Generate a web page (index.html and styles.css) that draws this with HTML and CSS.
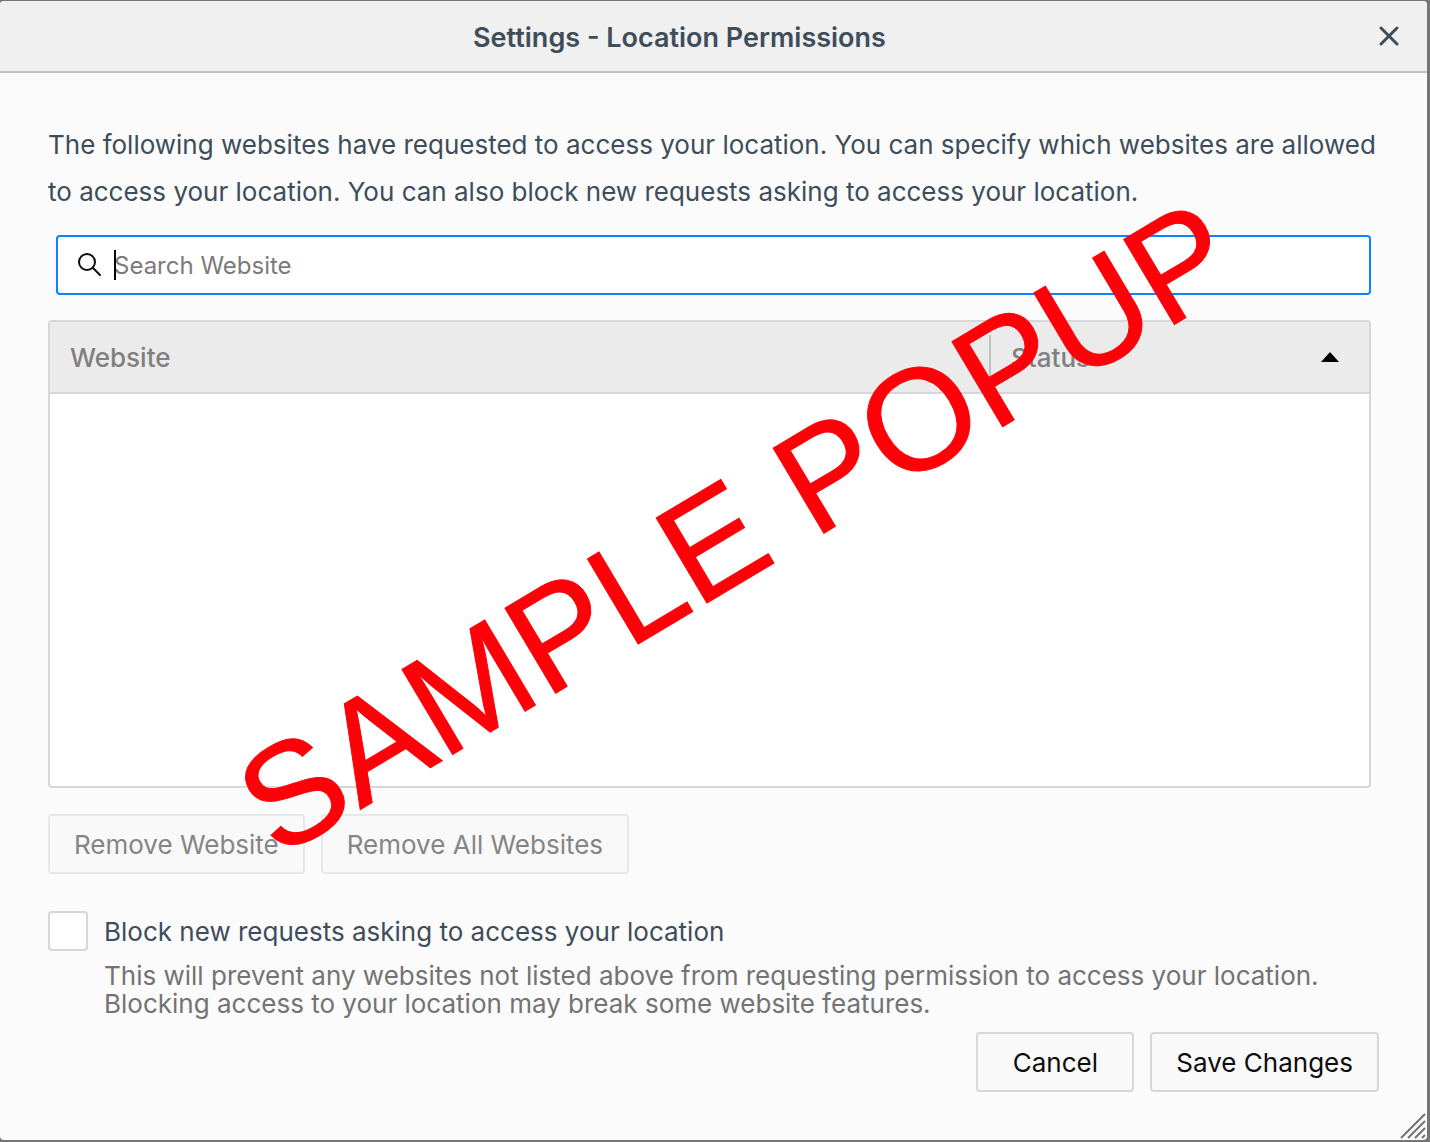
FILE: index.html
```html
<!DOCTYPE html>
<html lang="en">
<head>
<meta charset="utf-8">
<title>Settings - Location Permissions</title>
<link rel="stylesheet" href="styles.css">
</head>
<body>
<main class="dialog">
  <header class="titlebar">
    <h1 class="title">Settings - Location Permissions</h1>
    <button class="close" type="button" aria-label="Close">
      <svg width="20" height="20" viewBox="0 0 20 20"><path d="M2 2L18 18M18 2L2 18" fill="none" stroke="#3e4d5a" stroke-width="3" stroke-linecap="round"/></svg>
    </button>
  </header>
  <form class="content">
    <p class="intro">The following websites have requested to access your location. You can specify which websites are allowed to access your location. You can also block new requests asking to access your location.</p>
    <label class="search">
      <svg width="24" height="26" viewBox="0 0 24 26"><circle cx="9" cy="10" r="8" fill="none" stroke="#0c0c0d" stroke-width="2"/><path d="M15 16L22 23" stroke="#0c0c0d" stroke-width="2" stroke-linecap="round"/></svg>
      <span class="caret"></span>
      <input class="search-input" type="text" placeholder="Search Website" aria-label="Search Website">
    </label>
    <div class="list">
      <table class="sites">
        <thead><tr><th class="site-col">Website</th><th class="status-col"><span class="status-head">Status<svg width="18" height="10" viewBox="0 0 18 10"><path d="M0 10L9 0L18 10Z" fill="#000"/></svg></span></th></tr></thead>
      </table>
    </div>
    <div class="removals">
      <button class="button muted" type="button" disabled>Remove Website</button>
      <button class="button muted" type="button" disabled>Remove All Websites</button>
    </div>
    <div class="block">
      <input class="check" type="checkbox" id="block-new">
      <div>
        <label class="block-label" for="block-new">Block new requests asking to access your location</label>
        <p class="hint">This will prevent any websites not listed above from requesting permission to access your location. Blocking access to your location may break some website features.</p>
      </div>
    </div>
    <div class="actions">
      <button class="button" type="button">Cancel</button>
      <button class="button" type="button">Save Changes</button>
    </div>
  </form>
  <svg class="grip" width="28" height="28" viewBox="0 0 28 28"><path d="M2 26L26 2M9 26L26 9M16 26L26 16M23 26L26 23" stroke="#737373" stroke-width="2"/></svg>
  <div class="watermark">SAMPLE POPUP</div>
</main>
</body>
</html>
```
FILE: styles.css
```css
* { box-sizing: border-box; }
body { margin: 0; padding: 1px 3px 3px 0; background: #757575; font: 26px Inter, sans-serif; color: #3e4d5a; }
.dialog { position: relative; min-height: calc(100vh - 4px); background: #fbfbfb; border-radius: 4px; overflow: hidden; }
.titlebar { display: flex; align-items: center; gap: 20px; height: 72px; padding-right: 28px; background: #f0f0f0; border-bottom: 2px solid #c1c1c1; }
.title { flex: 1; margin: 0; padding-top: 2px; text-align: center; font-size: 27px; font-weight: 600; }
.close { display: flex; padding: 0; border: 0; background: none; }
.content { padding: 48px; }
.intro { margin: 0 0 20px; line-height: 47px; }
.search { display: flex; align-items: center; height: 60px; margin: 0 8px; padding: 0 20px; background: #fff; border: 2px solid #0a84ff; border-radius: 4px; }
.caret { z-index: 1; width: 2px; height: 30px; margin: 0 -2px 0 12px; background: #000; }
.search-input { flex: 1; border: 0; outline: 0; padding: 0; background: none; font: 24px Inter, sans-serif; }
.search-input::placeholder { color: #7b7b7b; }
.list { height: 468px; margin: 25px 8px 0 0; background: #fff; border: 2px solid #d7d7db; border-radius: 4px; }
.sites { width: 100%; border-collapse: separate; border-spacing: 0; table-layout: fixed; }
th { height: 72px; padding: 0 20px; background: #ebebeb; border-bottom: 2px solid #d7d7db; text-align: left; font-weight: 500; color: #808080; }
.status-col { width: 380px; padding: 0; }
.status-head { display: flex; align-items: center; justify-content: space-between; height: 44px; padding: 0 30px 0 20px; border-left: 2px solid #c1c1c1; }
.removals { display: flex; gap: 16px; margin-top: 26px; }
.button { min-width: 158px; height: 60px; padding: 0 24px; background: #f9f9fa; border: 2px solid #d7d7db; border-radius: 4px; font: inherit; color: #0c0c0d; }
.muted { color: #858585; border-color: #e8e8ea; }
.block { display: flex; gap: 16px; margin-top: 37px; }
.check { appearance: none; flex: none; width: 40px; height: 40px; margin: 0; background: #fff; border: 2px solid #d7d7db; border-radius: 4px; }
.block-label { display: block; line-height: 42px; }
.hint { margin: 9px 0 0; line-height: 28px; color: #737373; }
.actions { display: flex; justify-content: flex-end; gap: 16px; margin-top: 14px; }
.grip { position: absolute; right: 0; bottom: 0; }
.watermark { position: absolute; left: calc(50% + 23px); top: 527px; transform: translate(-50%, -50%) rotate(-30.8deg); white-space: nowrap; font: 144px "Liberation Sans", sans-serif; color: #ff0008; -webkit-text-stroke: 1px #ff0008; pointer-events: none; }
```
